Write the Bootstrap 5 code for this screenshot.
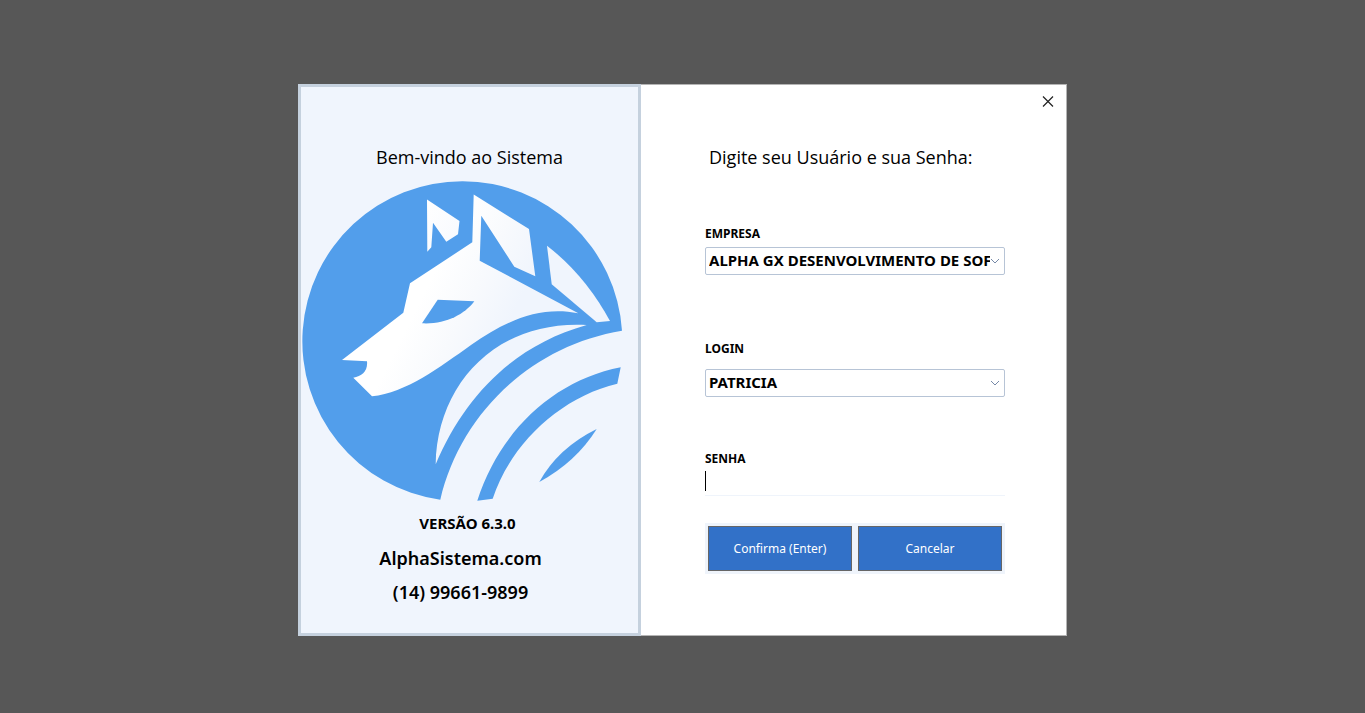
<!DOCTYPE html>
<html lang="pt-BR">
<head>
<meta charset="utf-8">
<meta name="viewport" content="width=device-width, initial-scale=1">
<title>AlphaSistema - Login</title>
<link href="https://cdn.jsdelivr.net/npm/bootstrap@5.3.0/dist/css/bootstrap.min.css" rel="stylesheet">
<style>
  body { background: #575757; color: #000; font-family: "Noto Sans", "Open Sans", sans-serif; }
  .page-shell { padding-top: 7px; }
  .login-window { width: 769px; max-width: 100%; background: #fff; }
  .brand-pane { flex: 0 1 343px; min-width: 0; background: #f0f5fd; border: 3px solid #c5d1de; padding: 56px 0 24px; }
  .form-pane { flex: 1 1 0; min-width: 320px; border: 1px solid #b4b4b4; border-left: 0; padding: 58px 61px 61px 64px; }
  .headline { font-family: "Open Sans", sans-serif; font-size: 18px; line-height: 28px; font-weight: 400; margin: 0; }
  .brand-logo { width: 322px; max-width: 100%; margin-top: 9px; }
  .version-text { font-size: 15px; line-height: 20px; font-weight: 700; margin-top: 11px; padding-right: 4px; }
  .contact-text { font-size: 18px; line-height: 34px; font-weight: 600; padding-right: 18px; }
  .field-label { display: block; font-size: 12px; line-height: 16px; font-weight: 700; }
  .field-company { margin-top: 55px; }
  .field-login { margin-top: 66px; }
  .field-password { margin-top: 54px; }
  .form-select.login-select {
    height: 28px; padding: 0 14px 2px 3px; margin-top: 5px; color: #000;
    font-size: 15px; line-height: 24px; font-weight: 700;
    border: 1px solid #b7c4d6; border-radius: 2px;
    background-image: url("data:image/svg+xml,%3Csvg xmlns='http://www.w3.org/2000/svg' viewBox='0 0 10 6'%3E%3Cpath d='M1 1l4 4 4-4' fill='none' stroke='%23778aa8'/%3E%3C/svg%3E");
    background-size: 10px 6px; background-position: right 4px center;
    text-overflow: clip;
  }
  .field-login .login-select { margin-top: 12px; }
  .password-line {
    height: 28px; padding: 0 4px; margin-top: 1px; border: 0; border-bottom: 1px solid #eff4fb; border-radius: 0;
    font-size: 15px; caret-color: transparent;
    background: linear-gradient(#000, #000) no-repeat 0 3px / 1px 20px;
  }
  .action-bar { background: #eff4fb; padding: 3px; gap: 6px; margin-top: 27px; }
  .btn.action-btn {
    height: 45px; padding: 0; font-size: 12px; line-height: 16px; color: #fff;
    background: #3271c8; border: 1px solid #666; border-radius: 0;
  }
  .close-btn { top: 11px; right: 12px; line-height: 0; }
</style>
</head>
<body>
<main class="page-shell min-vh-100 d-flex align-items-center justify-content-center">
  <div class="login-window d-flex flex-wrap flex-md-nowrap position-relative">
    <section class="brand-pane text-center">
      <h1 class="headline">Bem-vindo ao Sistema</h1>
      <div class="text-start">
        <svg class="brand-logo" viewBox="301 180 322 322" role="img" aria-label="AlphaSistema">
          <defs>
            <linearGradient id="fur" gradientUnits="userSpaceOnUse" x1="435" y1="270" x2="515" y2="310">
              <stop offset="0" stop-color="#fff"/><stop offset=".5" stop-color="#f8fafd"/><stop offset="1" stop-color="#f0f5fd"/>
            </linearGradient>
            <linearGradient id="tip" x1="0" y1="0" x2="1" y2="1">
              <stop offset="0" stop-color="#fff"/><stop offset="1" stop-color="#f6f9fe"/>
            </linearGradient>
          </defs>
          <path fill="#529eeb" d="M622 330.7A160 160 0 1 0 440.3 499.7C460 415 530 346 622 330.7Z"/>
          <path fill="url(#tip)" d="M427 199.5L459.5 221 458 234.3 446.3 241.7 433 222.7 431.3 247.3 427.3 251.7Z"/>
          <path fill="url(#fur)" d="M410 283.3L472.3 242.3 473.7 194.5 529 229 535.3 276.3 514.3 266.7 481.3 215.7 479.7 260.7 578.3 313.3C541 306 508 319 471 345C440 367 406 393 372 396.3L353.3 377.7C362 376.5 368 371 367 361.3L342 360 403.3 312.7Z"/>
          <path fill="#529eeb" d="M437.7 299.7L474.3 301.3C464 315 445 324.5 422 323.3Z"/>
          <path fill="#f0f5fd" d="M547 245.7Q585 275 610 321L596.7 322.3 551.7 284.3Z"/>
          <path fill="#f0f5fd" d="M435.7 464.3C437 385 495 320 586.7 325C515 345 465 395 435.7 464.3Z"/>
          <path fill="#529eeb" d="M620.7 367.3C555 380 500 430 477.3 500.7L492.7 498.7C510 445 560 397 617.3 383.7Z"/>
          <path fill="#529eeb" d="M596.7 429Q576 462 539.3 482Q558 448 596.7 429Z"/>
        </svg>
      </div>
      <div class="version-text">VERSÃO 6.3.0</div>
      <div class="contact-text mt-2">AlphaSistema.com</div>
      <div class="contact-text">(14) 99661-9899</div>
    </section>
    <form class="form-pane">
      <button type="button" class="close-btn btn p-0 border-0 position-absolute" aria-label="Fechar">
        <svg width="13" height="13" viewBox="0 0 13 13"><path d="M1 1.500l10 10M11 1.500l-10 10" stroke="#222" stroke-width="1.200"/></svg>
      </button>
      <h2 class="headline ps-1">Digite seu Usuário e sua Senha:</h2>
      <div class="field-company">
        <label class="field-label" for="empresa">EMPRESA</label>
        <select id="empresa" class="form-select login-select"><option>ALPHA GX DESENVOLVIMENTO DE SOFTWARE</option></select>
      </div>
      <div class="field-login">
        <label class="field-label" for="login">LOGIN</label>
        <select id="login" class="form-select login-select"><option>PATRICIA</option></select>
      </div>
      <div class="field-password">
        <label class="field-label" for="senha">SENHA</label>
        <input id="senha" type="password" class="form-control password-line">
      </div>
      <div class="action-bar d-flex">
        <button type="submit" class="btn action-btn flex-fill w-50">Confirma (Enter)</button>
        <button type="button" class="btn action-btn flex-fill w-50">Cancelar</button>
      </div>
    </form>
  </div>
</main>
<script src="https://cdn.jsdelivr.net/npm/bootstrap@5.3.0/dist/js/bootstrap.bundle.min.js"></script>
</body>
</html>
